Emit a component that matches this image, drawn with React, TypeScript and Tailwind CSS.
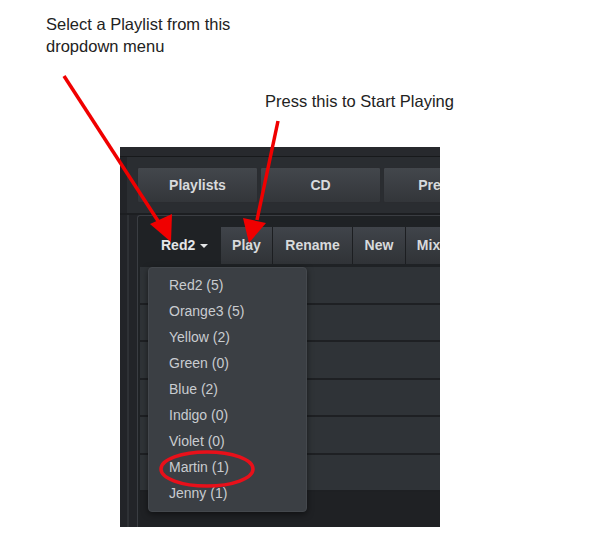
import React from "react";

const topTabs = ["Playlists", "CD", "Presets"];
const actions = [
  { label: "Play", w: "w-[52px]" },
  { label: "Rename", w: "w-[80px]" },
  { label: "New", w: "w-[53px]" },
  { label: "Mix", w: "w-[46px]" },
];
const playlists = [
  "Red2 (5)",
  "Orange3 (5)",
  "Yellow (2)",
  "Green (0)",
  "Blue (2)",
  "Indigo (0)",
  "Violet (0)",
  "Martin (1)",
  "Jenny (1)",
];

export default function App() {
  return (
    <div
      className="relative w-[593px] h-[550px] bg-white overflow-hidden text-[#222]"
      style={{ fontFamily: '"Liberation Sans", Arial, sans-serif' }}
    >
      <div className="pt-[13px] pl-[46px] text-[16.5px] leading-[22px]">
        Select a Playlist from this
        <br />
        dropdown menu
      </div>
      <div className="mt-[33px] pl-[265px] text-[16.5px] leading-[22px]">
        Press this to Start Playing
      </div>

      {/* screenshot panel */}
      <div className="mt-[35px] ml-[120px] w-[320px] h-[380px] bg-[#222428] overflow-hidden flex flex-col">
        <div className="h-[9px] bg-[#27292d] shrink-0" />
        <div className="h-[1px] bg-[#17191b] shrink-0" />
        <div className="bg-[#2a2d31] pt-[10px] pb-[10px] pl-[10px] border-l-[7px] border-[#222428] flex gap-[2px] shrink-0 overflow-hidden">
          {topTabs.map((t) => (
            <div
              key={t}
              className="w-[121px] h-[36px] shrink-0 rounded-[2px] bg-gradient-to-b from-[#43474c] to-[#33363a] border border-[#2a2c30] flex items-center justify-center text-[14px] font-bold text-[#d8dadc]"
            >
              {t}
            </div>
          ))}
        </div>
        <div className="h-[2px] bg-[#1c1e21] shrink-0" />
        <div className="flex-1 flex min-h-0">
          <div className="w-[7px] shrink-0 bg-[#222428]" />
          <div className="w-[2px] shrink-0 bg-[#2e3135]" />
          <div className="w-[8px] shrink-0 bg-[#222428]" />
          <div className="flex-1 min-w-0 border-l border-t border-[#3a3d42] rounded-tl-[3px] bg-[#1f2225] flex flex-col overflow-hidden">
            <div className="h-[11px] shrink-0" />
            <div className="flex h-[37px] shrink-0 pl-[10px]">
              <div className="w-[73px] shrink-0 h-[37px] flex items-center pl-[13px] text-[14px] font-bold text-[#e4e6e8]">
                Red2
                <span className="ml-[5px] inline-block w-0 h-0 border-l-[4px] border-r-[4px] border-t-[4px] border-l-transparent border-r-transparent border-t-[#e4e6e8]" />
              </div>
              {actions.map((a) => (
                <div
                  key={a.label}
                  className={`${a.w} h-[37px] shrink-0 bg-gradient-to-b from-[#40444a] to-[#303337] border-r border-[#1c1e21] flex items-center justify-center text-[14px] font-bold text-[#d8dadc]`}
                >
                  {a.label}
                </div>
              ))}
            </div>
            <div className="h-[3px] bg-[#1f2225] shrink-0" />
            <div className="relative flex flex-col pl-[2px]">
              {[0, 1, 2, 3, 4, 5].map((i) => (
                <div
                  key={i}
                  className="h-[37.5px] bg-[#2f3337] border-b-[2px] border-[#1e2023]"
                />
              ))}
              <div className="h-[40px] bg-[#1f2124]" />
              {/* dropdown menu */}
              <div className="absolute left-[10px] top-[0px] w-[159px] h-[245px] rounded-[4px] bg-[#3b3f44] border border-[#44484d] shadow-[0_2px_6px_rgba(0,0,0,0.5)] pt-[4px]">
                {playlists.map((p) => (
                  <div
                    key={p}
                    className="h-[26px] flex items-center pl-[20px] text-[14px] text-[#c9ccd0]"
                  >
                    {p}
                  </div>
                ))}
              </div>
            </div>
          </div>
        </div>
      </div>

      {/* annotation overlay: arrows and ellipse */}
      <svg
        className="absolute left-0 top-0 pointer-events-none"
        width="593"
        height="550"
        viewBox="0 0 593 550"
      >
        <line x1="64" y1="76" x2="160" y2="224" stroke="#f00000" strokeWidth="3.5" />
        <polygon points="171,242 150,224 172,214" fill="#f00000" />
        <line x1="278" y1="121" x2="257" y2="220" stroke="#f00000" strokeWidth="3.5" />
        <polygon points="249,243 243,218 266,223" fill="#f00000" />
        <ellipse cx="207" cy="469" rx="46" ry="17" fill="none" stroke="#e8101a" strokeWidth="3.5" />
      </svg>
    </div>
  );
}
